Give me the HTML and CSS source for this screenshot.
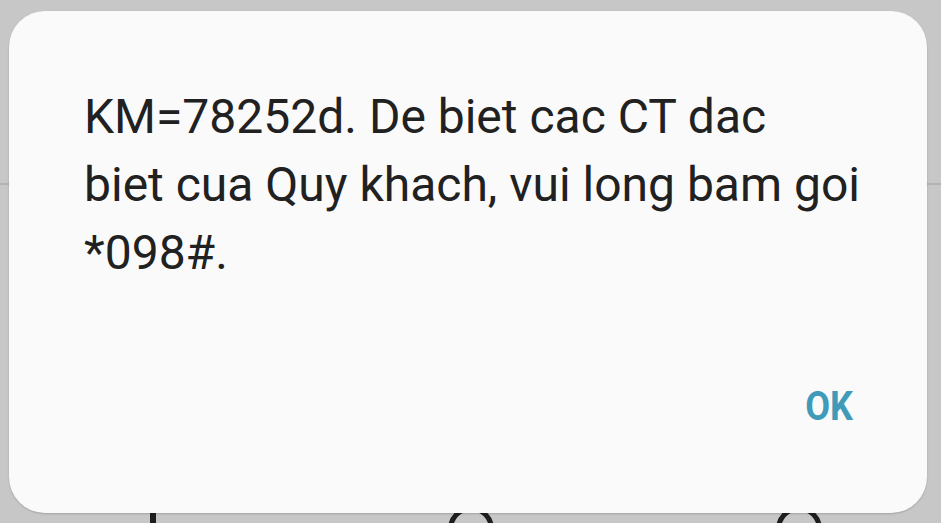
FILE: index.html
```html
<!DOCTYPE html>
<html>
<head>
<meta charset="utf-8">
<link rel="stylesheet" href="styles.css">
</head>
<body>
<div class="screen">
  <div class="backdrop">
    <div class="divider"></div>
    <div class="navbar">
      <span class="nav-bar-icon"></span>
      <span class="nav-circle nav-home"></span>
      <span class="nav-circle nav-back"></span>
    </div>
  </div>
  <div class="dialog">
    <p class="message">KM=78252d. De biet cac CT dac<br>biet cua Quy khach, vui long bam goi<br>*098#.</p>
    <div class="actions">
      <button class="ok">OK</button>
    </div>
  </div>
</div>
</body>
</html>
```

FILE: styles.css
```css
html, body {
  margin: 0;
  padding: 0;
}
body {
  width: 941px;
  height: 523px;
  overflow: hidden;
  background: #c7c7c7;
  font-family: Roboto, "Noto Sans", sans-serif;
}
.screen {
  position: relative;
  width: 941px;
  height: 523px;
  overflow: hidden;
}
.backdrop {
  height: 523px;
  display: flex;
  flex-direction: column;
}
.divider {
  margin-top: 183px;
  height: 2px;
  background: #b3b3b3;
}
.navbar {
  margin-top: auto;
  height: 30px;
  position: relative;
  overflow: hidden;
}
.nav-bar-icon {
  position: absolute;
  left: 150px;
  top: 0;
  width: 6px;
  height: 30px;
  background: #1e1e1e;
}
.nav-circle {
  position: absolute;
  top: 13px;
  width: 36px;
  height: 36px;
  border: 5px solid #1e1e1e;
  border-radius: 50%;
}
.nav-home { left: 448px; }
.nav-back { left: 776px; }
.dialog {
  position: absolute;
  left: 9px;
  top: 11px;
  width: 918px;
  height: 502px;
  box-sizing: border-box;
  background: #fafafa;
  border-radius: 36px;
  box-shadow: 0 1px 2px rgba(0,0,0,0.18);
  padding: 72px 74px 0 75px;
  display: flex;
  flex-direction: column;
}
.message {
  margin: 0;
  font-size: 48px;
  line-height: 68px;
  color: #212121;
  white-space: nowrap;
}
.actions {
  display: flex;
  justify-content: flex-end;
  margin-top: 100px;
}
.ok {
  border: none;
  background: none;
  padding: 0;
  font-family: Roboto, sans-serif;
  font-weight: 700;
  font-size: 40px;
  line-height: 40px;
  color: #3f9bb9;
  transform: scaleX(0.9);
  transform-origin: right center;
}
```
